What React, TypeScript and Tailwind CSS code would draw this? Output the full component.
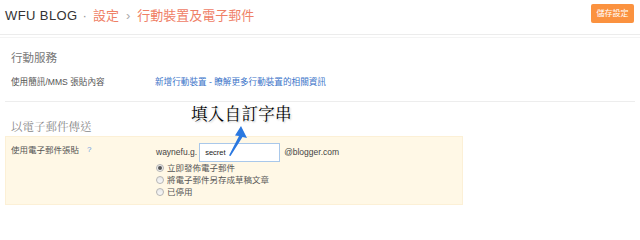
const FONT = "font-['Liberation_Sans','Noto_Sans_CJK_TC',sans-serif]";

const Radio = ({ checked = false }: { checked?: boolean }) => (
  <span className="w-[8px] h-[8px] rounded-full border border-[#b5b5b5] bg-gradient-to-b from-[#e9e9e9] to-[#f8f8f8] flex items-center justify-center shrink-0">
    {checked && <span className="w-[4px] h-[4px] rounded-full bg-[#555]" />}
  </span>
);

export default function App() {
  const options = ["立即發佈電子郵件", "將電子郵件另存成草稿文章", "已停用"];

  return (
    <div className={`relative w-[640px] h-[210px] bg-white overflow-hidden ${FONT}`}>
      {/* header */}
      <header className="h-[35px] flex items-start justify-between pl-[5px] pr-[5px] border-b border-[#ececec]">
        <div className="mt-[8px] flex items-center text-[13px] leading-[15px]">
          <span className="text-[#333] tracking-[0.4px]">WFU BLOG</span>
          <span className="text-[#999] ml-[5px] mr-[6px]">·</span>
          <span className="text-[#ef8066]">設定</span>
          <span className="text-[#aaa] mx-[7px]">›</span>
          <span className="text-[#ef8066]">行動裝置及電子郵件</span>
        </div>
        <button className="mt-[4px] mr-[1px] w-[43px] h-[19px] bg-[#fb923f] rounded-[2px] text-white text-[8px] leading-none flex items-center justify-center">
          儲存設定
        </button>
      </header>

      <div className="mt-[2px] border-t border-[#f4f4f4]">
        <section className="pl-[11px]">
          <h2 className="mt-[12px] text-[11.5px] leading-[16px] text-[#777]">行動服務</h2>
          <div className="mt-[10px] flex text-[8.6px] leading-[12px]">
            <span className="w-[144px] text-[#555]">使用簡訊/MMS 張貼內容</span>
            <span className="text-[#3b74c9]">新增行動裝置 - 瞭解更多行動裝置的相關資訊</span>
          </div>
        </section>

        <div className="mx-[5px] mt-[13px] border-t border-[#ededed]" />

        <section>
          <h2 className="pl-[11px] mt-[16px] text-[11.5px] leading-[16px] text-[#888] font-['Noto_Serif_CJK_TC','Liberation_Serif','Noto_Sans_CJK_TC',serif]">
            以電子郵件傳送
          </h2>
          <div className="ml-[5px] mt-[2px] w-[458px] h-[69px] bg-[#fff8e6] border border-[#fcf0d6] flex">
            <div className="w-[150px] pl-[5px] pt-[7px] flex items-start text-[8.5px] leading-[12px] text-[#555]">
              <span>使用電子郵件張貼</span>
              <span className="ml-[8px] text-[#6a9be0] text-[8px]">?</span>
            </div>
            <div className="pt-[6px] flex flex-col">
              <div className="h-[19px] flex items-center text-[8.5px] text-[#444]">
                <span>waynefu.g.</span>
                <div className="ml-[2px] w-[81px] h-[19px] border border-[#a9c8ea] bg-white flex items-center pl-[5px] text-[7.5px] text-[#222]">
                  secret
                </div>
                <span className="ml-[4px]">@blogger.com</span>
              </div>
              {options.map((o, i) => (
                <div key={o} className="h-[12px] flex items-center gap-[3px] text-[8.5px] text-[#555]">
                  <Radio checked={i === 0} />
                  <span>{o}</span>
                </div>
              ))}
            </div>
          </div>
        </section>
      </div>

      {/* annotation */}
      <div className="absolute left-[191px] top-[103px] text-[16.5px] leading-[20px] text-black tracking-[0.3px] font-['Noto_Serif_CJK_TC','Noto_Sans_CJK_TC',serif] [text-shadow:0_0_2px_#fff,0_0_3px_#fff,1px_1px_2px_#bbb]">
        填入自訂字串
      </div>
      <svg className="absolute left-[226px] top-[125px]" width="22" height="33" viewBox="0 0 22 33">
        <polygon points="15,1 21,13 16.5,12 4.5,31 3,30.5 13,11 9,10.5" fill="#2a78e0" />
      </svg>
    </div>
  );
}
